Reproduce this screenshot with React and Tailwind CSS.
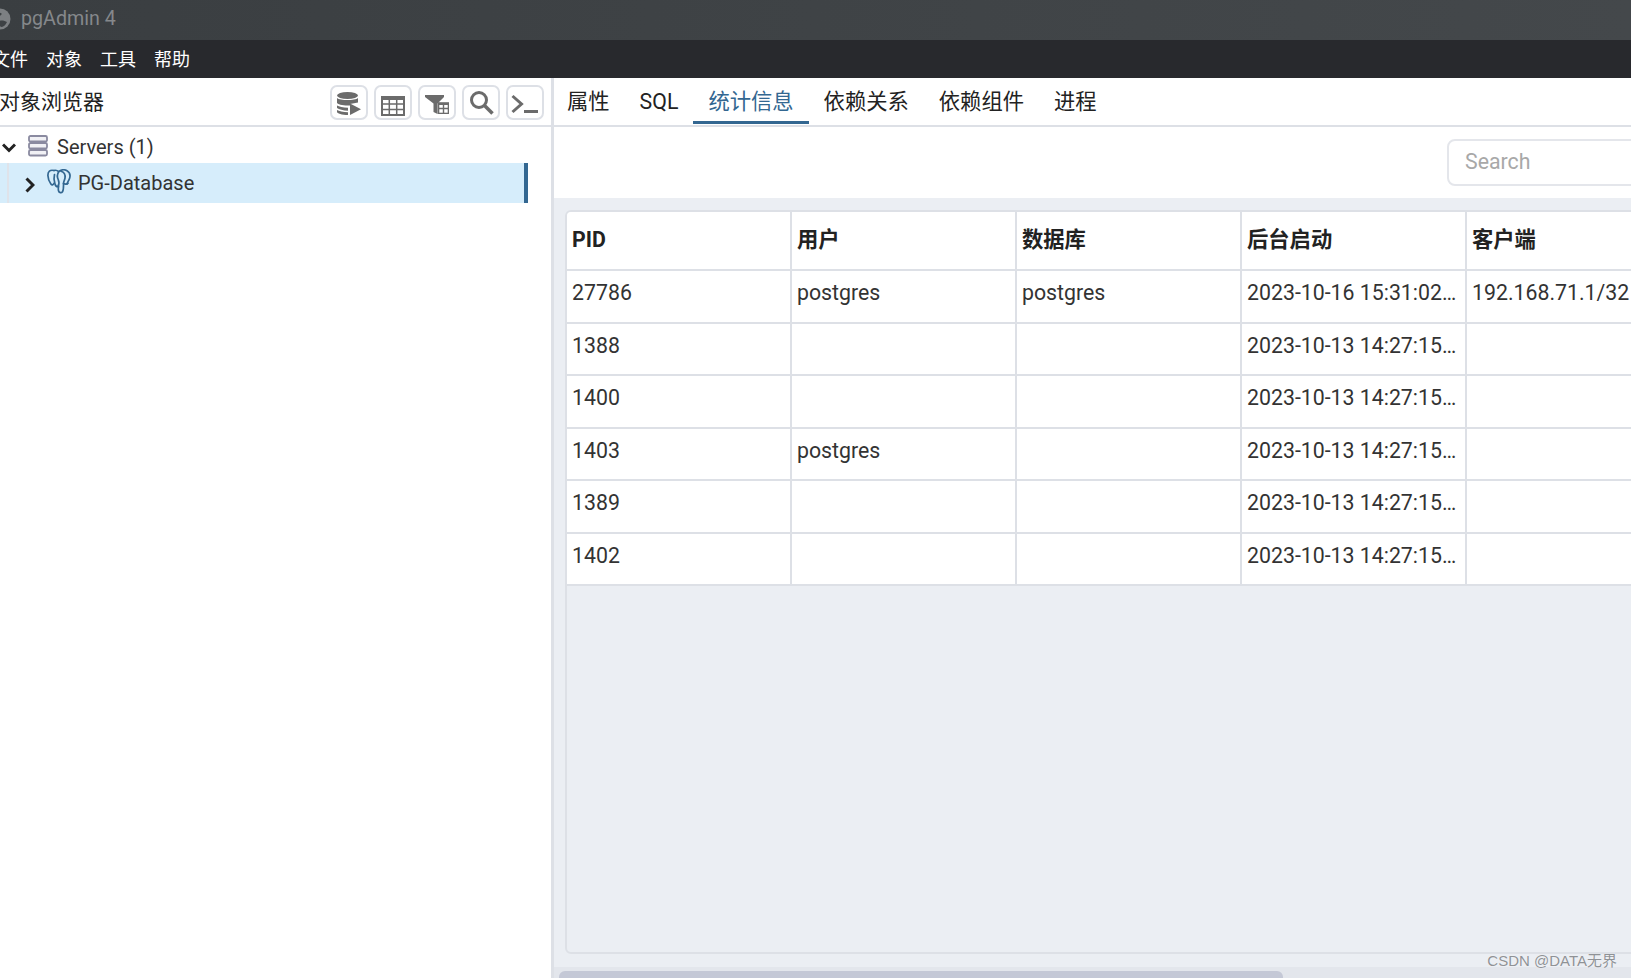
const rows = [
  { pid: '27786', user: 'postgres', db: 'postgres', start: '2023-10-16 15:31:02…', client: '192.168.71.1/32' },
  { pid: '1388', user: '', db: '', start: '2023-10-13 14:27:15…', client: '' },
  { pid: '1400', user: '', db: '', start: '2023-10-13 14:27:15…', client: '' },
  { pid: '1403', user: 'postgres', db: '', start: '2023-10-13 14:27:15…', client: '' },
  { pid: '1389', user: '', db: '', start: '2023-10-13 14:27:15…', client: '' },
  { pid: '1402', user: '', db: '', start: '2023-10-13 14:27:15…', client: '' },
];

const tabs = ['属性', 'SQL', '统计信息', '依赖关系', '依赖组件', '进程'];
const headers = ['PID', '用户', '数据库', '后台启动', '客户端'];

function DbIcon() {
  return (
    <svg width="24" height="23" viewBox="0 0 24 23" fill="#6b6b6b">
      <ellipse cx="10.500" cy="3.500" rx="10.500" ry="3.500" />
      <path d="M0 6c3 2.800 18 2.800 21 0v4.500l-8 1.500v1.500C7 13.500 2 13 0 11z" />
      <path d="M0 13.500c2 1.300 6 2 11 2.200v3C6 18.500 2 17.500 0 16z" />
      <path d="M0 18c2 1.300 6 2 11 2.200V23C5 23 0 21.500 0 20z" />
      <path d="M13 11.500l11 5.800L13 23z" />
    </svg>
  );
}

function TableIcon() {
  return (
    <svg width="24" height="20" viewBox="0 0 24 20">
      <rect x="1" y="1" width="22" height="18" fill="none" stroke="#6b6b6b" strokeWidth="2" />
      <path d="M1 2.500h22" stroke="#6b6b6b" strokeWidth="3" />
      <path d="M1 8h22M1 13.500h22M8.300 1v18M15.700 1v18" stroke="#6b6b6b" strokeWidth="1.500" />
    </svg>
  );
}

function FilterTableIcon() {
  return (
    <svg width="24" height="19" viewBox="0 0 24 19" fill="#6b6b6b">
      <path d="M0 0h19v2l-6.500 6.500V19l-4-2V8.500L0 2z" />
      <rect x="13.500" y="8" width="10" height="10.500" fill="#fff" stroke="#6b6b6b" strokeWidth="1.600" />
      <path d="M13.500 9h10" stroke="#6b6b6b" strokeWidth="2" />
      <path d="M13.500 13.500h10M18.500 9v9" stroke="#6b6b6b" strokeWidth="1.400" />
    </svg>
  );
}

function SearchIcon() {
  return (
    <svg width="25" height="25" viewBox="0 0 25 25" fill="none" stroke="#6b6b6b" strokeWidth="3">
      <circle cx="10" cy="10" r="7.500" />
      <path d="M15.500 15.500l8 8" strokeWidth="3.500" />
    </svg>
  );
}

function TerminalIcon() {
  return (
    <svg width="28" height="20" viewBox="0 0 28 20" fill="none" stroke="#6b6b6b" strokeWidth="3">
      <path d="M1.500 2l9 8-9 8" />
      <path d="M13 17.500h14" />
    </svg>
  );
}

const tools = [
  { Icon: DbIcon, cls: 'pt-[2px]' },
  { Icon: TableIcon, cls: 'pt-[6px]' },
  { Icon: FilterTableIcon, cls: 'pt-[3px]' },
  { Icon: SearchIcon, cls: 'pb-[1px]' },
  { Icon: TerminalIcon, cls: 'pt-[2px]' },
];

function ServersIcon() {
  return (
    <svg width="20" height="22" viewBox="0 0 20 22" fill="#f1f1f5" stroke="#8a8aa0" strokeWidth="1.800">
      <rect x="1" y="1" width="18" height="5.500" rx="1.500" />
      <rect x="1" y="8" width="18" height="5.500" rx="1.500" />
      <rect x="1" y="15" width="18" height="5.500" rx="1.500" />
    </svg>
  );
}

function ElephantIcon() {
  return (
    <svg width="24" height="25" viewBox="0 0 24 25" fill="none" stroke="#336791" strokeWidth="1.700" strokeLinecap="round" strokeLinejoin="round">
      <path d="M7 1.500C3 .5.800 2.500.900 6.500c.1 3 1.500 6.500 3 8.500 1 1.300 2.300 1 3-.5" />
      <path d="M7 1.500c2-.6 3.500 0 4.700 1.200C13.500 1 17 0 20 1.700c3 1.800 3.400 5 2.600 7.500-.8 2.500-2.300 4-2.600 6" />
      <path d="M7.500 5.500c-.8 3-.6 6.500.5 9.500.5 2 1.500 3 3.400 2.600" />
      <path d="M11.700 2.700C10 5.500 10 8 11.200 10.500c.7 1.500.8 5-.2 7" />
      <path d="M14 2.200c3 .8 4.500 3.500 4 7-.3 2-1.500 3-1.500 5.500 0 3 .3 6-1 8-1 1.500-3.500 1.300-4-1-.3-1.500-.2-3 0-4.500" />
      <path d="M16.500 14.500c1.500.8 3 .8 4.500-.3" />
    </svg>
  );
}

function ChevronDown() {
  return (
    <svg width="14" height="10" viewBox="0 0 14 10" fill="none" stroke="#222" strokeWidth="3">
      <path d="M1 1.500l6 6 6-6" />
    </svg>
  );
}

function ChevronRight() {
  return (
    <svg width="10" height="16" viewBox="0 0 10 16" fill="none" stroke="#222" strokeWidth="3">
      <path d="M1.500 1.500l6.500 6.500-6.500 6.500" />
    </svg>
  );
}

function PgLogo() {
  return (
    <svg width="22" height="22" viewBox="0 0 22 22" fill="#7d8083">
      <circle cx="11" cy="11" r="10.500" />
      <path d="M4 6c3-2 7-2 9 0-2 1-2 3-4 3S5 9 4 6zM10 13c3-1 6 0 8 1-1 3-4 5-6 5-2-2-3-4-2-6z" fill="#3e4245" />
    </svg>
  );
}

export default function App() {
  return (
    <div className="h-screen w-full overflow-hidden flex flex-col bg-white font-['Roboto','Noto_Sans_CJK_SC',sans-serif] text-[#222]">
      <div className="h-10 shrink-0 flex items-center pb-[2px] bg-gradient-to-r from-[#3a3e41] to-[#44484b] -ml-[11px]">
        <PgLogo />
        <span className="ml-[10px] text-[19.700px] text-[#85888b]">pgAdmin 4</span>
      </div>
      <div className="h-[38px] shrink-0 flex items-center gap-[18px] bg-[#28292d] text-[18px] text-white -ml-2">
        <span>文件</span>
        <span>对象</span>
        <span>工具</span>
        <span>帮助</span>
      </div>
      <div className="flex-1 flex min-h-0">
        <div className="w-[554px] shrink-0 border-r-[3px] border-[#dde0e6] flex flex-col">
          <div className="h-[49px] shrink-0 flex items-center justify-between border-b-2 border-[#dde0e6] pr-[7px]">
            <span className="text-[21px] -ml-px mt-[2px]">对象浏览器</span>
            <div className="flex gap-[6px] mt-[2px]">
              {tools.map(({ Icon, cls }, i) => (
                <button key={i} className={`w-[38px] h-[35px] flex items-center justify-center border-2 border-[#dde0e6] rounded-[7px] bg-white ${cls}`}>
                  <Icon />
                </button>
              ))}
            </div>
          </div>
          <div className="h-[36px] shrink-0 flex items-center text-[20px] text-[#333]">
            <span className="ml-[2px] w-[26px] flex mt-[6px]"><ChevronDown /></span>
            <span className="flex mt-[2px]"><ServersIcon /></span>
            <span className="ml-[9px] mt-1">Servers (1)</span>
          </div>
          <div className="h-10 shrink-0 mr-[23px] flex items-center bg-[#d6edfb] border-r-4 border-[#336791] text-[20px] text-[#333]">
            <span className="ml-[7px] h-full w-[2px] bg-[#dfe3ea]" />
            <span className="ml-[16px] w-[22px] flex mt-[3px]"><ChevronRight /></span>
            <span className="flex -mt-1"><ElephantIcon /></span>
            <span className="ml-[7px] -mt-px">PG-Database</span>
          </div>
        </div>
        <div className="flex-1 min-w-0 flex flex-col overflow-hidden">
          <div className="h-[49px] shrink-0 flex border-b-2 border-[#dde0e6] text-[21.300px]">
            <div className="flex -ml-[2px]">
              {tabs.map((t, i) => (
                <div key={t} className={`h-[46px] px-[15px] pt-[4px] flex items-center border-b-[3px] ${i === 2 ? 'border-[#336791] text-[#336791]' : 'border-transparent'}`}>
                  {t}
                </div>
              ))}
            </div>
          </div>
          <div className="h-[71px] shrink-0 flex items-start pl-[893px] pt-[12px]">
            <div className="w-[300px] shrink-0 h-[47px] pb-px border-2 border-[#e4e6eb] rounded-lg flex items-center pl-4 text-[21.300px] text-[#a8a8a8]">Search</div>
          </div>
          <div className="flex-1 min-h-0 bg-[#ebeef3] flex flex-col">
            <div className="flex-1 min-h-0 ml-[11px] mt-3 -mr-10 border-2 border-[#dde0e6] rounded-md overflow-hidden">
              <div className="grid grid-cols-[repeat(5,225px)] w-[1125px] bg-white text-[21.300px] text-[#333]">
                {headers.map((h, i) => (
                  <div key={h} className={`h-[59px] flex items-center px-[5px] pb-[2px] font-bold text-[#222] border-b-2 border-[#dde0e6] ${i < 4 ? 'border-r-2' : ''}`}>{h}</div>
                ))}
                {rows.map(r => (
                  [r.pid, r.user, r.db, r.start, r.client].map((c, i) => (
                    <div key={r.pid + i} className={`h-[52.500px] pt-[6px] px-[5px] whitespace-nowrap overflow-hidden border-b-2 border-[#dde0e6] ${i < 4 ? 'border-r-2' : ''}`}>{c}</div>
                  ))
                ))}
              </div>
            </div>
            <div className="h-[13px] shrink-0" />
            <div className="h-[11px] shrink-0 bg-[#e3e6ec] flex items-end pl-[5px]">
              <div className="w-[724px] h-[7px] rounded-t-md bg-[#c4c8d6]" />
            </div>
          </div>
        </div>
      </div>
      <span className="absolute right-[14px] bottom-[6px] text-[15px] text-[#8f9296] [text-shadow:0_0_1px_#fff] font-['Liberation_Sans','Noto_Sans_CJK_SC',sans-serif]">CSDN @DATA无界</span>
    </div>
  );
}
